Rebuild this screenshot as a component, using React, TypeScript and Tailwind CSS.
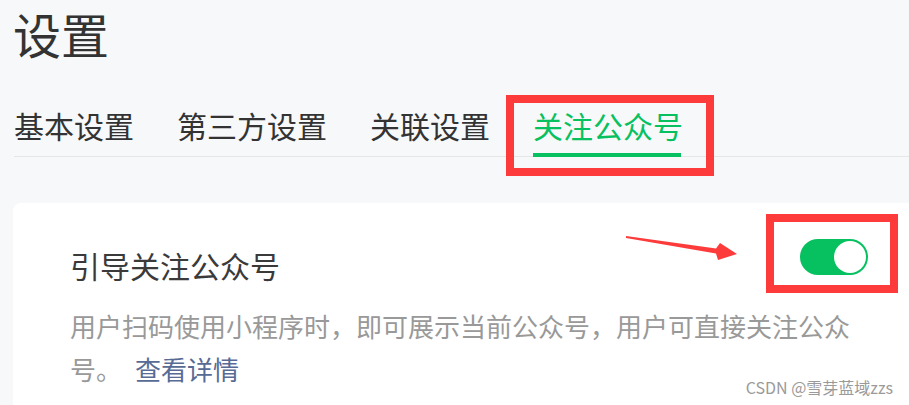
import React from 'react';

const TABS = ['基本设置', '第三方设置', '关联设置', '关注公众号'];
const ACTIVE = '关注公众号';

function Toggle() {
  return (
    <div className="relative shrink-0">
      <div className="flex h-[36px] w-[68px] items-center justify-end rounded-full bg-[#07c160] p-[2px]">
        <div className="h-[32px] w-[32px] rounded-full bg-white" />
      </div>
      {/* annotation box */}
      <div className="pointer-events-none absolute -bottom-[18px] -left-[34px] -right-[30px] -top-[25px] border-[8px] border-[#fd3b3b]" />
    </div>
  );
}

export default function App() {
  return (
    <div
      className="relative h-[405px] w-[909px] overflow-hidden bg-[#f7f8fa] text-[#333]"
      style={{ fontFamily: '"Noto Sans CJK SC", "Noto Sans", sans-serif' }}
    >
      <div className="pl-[13px] pt-[5px]">
        <h1 className="text-[48px] font-normal leading-[56px] text-[#333]">设置</h1>
      </div>

      <div className="ml-[14px] mt-[49px] flex gap-[43px] border-b border-[#e6e6e6]">
        {TABS.map((tab) => (
          <div key={tab} className="relative pb-[16px]">
            <span
              className={`block text-[30px] leading-[30px] ${
                tab === ACTIVE ? 'text-[#07c160]' : 'text-[#333]'
              }`}
            >
              {tab}
            </span>
            {tab === ACTIVE && (
              <>
                <div className="absolute -bottom-[1px] left-0 right-[2px] h-[4px] bg-[#07c160]" />
                <div className="pointer-events-none absolute -bottom-[20px] -left-[27px] -right-[31px] -top-[15px] border-[8px] border-[#fd3b3b]" />
              </>
            )}
          </div>
        ))}
      </div>

      <div className="ml-[13px] mt-[46px] h-[260px] rounded-l-lg bg-white pl-[57px] pr-[41px] pt-[36px]">
        <div className="flex items-start justify-between">
          <h2 className="mt-[11px] text-[30px] font-normal leading-[30px] text-[#3a3a3a]">引导关注公众号</h2>
          <Toggle />
        </div>
        <p className="mt-[24px] max-w-[790px] text-[26px] leading-[43px] text-[#999]">
          用户扫码使用小程序时，即可展示当前公众号，用户可直接关注公众号。
          <a className="ml-[13px] text-[#576b95]">查看详情</a>
        </p>
      </div>

      {/* annotation arrow */}
      <svg className="pointer-events-none absolute left-[620px] top-[228px]" width="125" height="40" viewBox="0 0 125 40">
        <polygon points="6,8 96,20.5 100,15 117,26 98,32 96,25.5 6,10" fill="#fd3b3b" />
      </svg>

      <div className="absolute right-[16px] top-[377px] text-[16px] leading-[20px] text-[#9a9a9a]">
        CSDN @雪芽蓝域zzs
      </div>
    </div>
  );
}
